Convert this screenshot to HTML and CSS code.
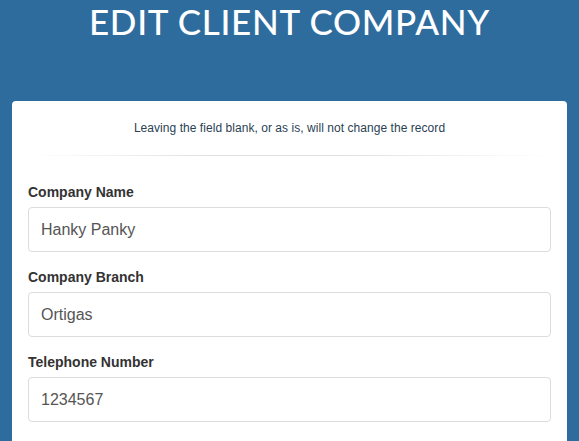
FILE: index.html
```html
<!DOCTYPE html>
<html>
<head>
<meta charset="utf-8">
<link rel="stylesheet" href="styles.css">
</head>
<body>
<div class="page">
  <h1 class="title">EDIT CLIENT COMPANY</h1>
  <div class="card">
    <p class="note">Leaving the field blank, or as is, will not change the record</p>
    <div class="divider"></div>
    <div class="group">
      <label class="label">Company Name</label>
      <div class="input">Hanky Panky</div>
    </div>
    <div class="group">
      <label class="label">Company Branch</label>
      <div class="input">Ortigas</div>
    </div>
    <div class="group">
      <label class="label">Telephone Number</label>
      <div class="input">1234567</div>
    </div>
    <div class="group">
      <label class="label">Company Address</label>
      <div class="input"></div>
    </div>
  </div>
</div>
</body>
</html>
```

FILE: styles.css
```css
* { box-sizing: border-box; }
html, body {
  margin: 0;
  padding: 0;
  background: #2e6c9e;
  font-family: "Liberation Sans", Arial, sans-serif;
  overflow: hidden;
}
.page {
  padding: 0 12px;
}
.title {
  margin: 0;
  height: 101px;
  padding-top: 1px;
  text-align: center;
  color: #ffffff;
  font-family: "Lato", "Open Sans", sans-serif;
  font-weight: 500;
  font-size: 35px;
  line-height: 40px;
  letter-spacing: 0.7px;
}
.card {
  background: #ffffff;
  border-radius: 4px;
  padding: 19px 16px 20px;
}
.note {
  margin: 0;
  text-align: center;
  font-size: 12px;
  line-height: 17px;
  letter-spacing: 0.05px;
  color: #2a3f54;
}
.divider {
  height: 1px;
  margin: 18px 0 26px;
  background: linear-gradient(to right, rgba(0,0,0,0) 0%, rgba(0,0,0,0.12) 35%, rgba(0,0,0,0.12) 60%, rgba(0,0,0,0) 100%);
}
.group {
  margin-bottom: 15px;
}
.label {
  display: block;
  font-size: 14px;
  font-weight: bold;
  line-height: 20px;
  margin-bottom: 5px;
  color: #333333;
}
.input {
  height: 45px;
  border: 1px solid #dcdcdc;
  border-radius: 4px;
  padding: 0 12px;
  font-size: 16px;
  line-height: 43px;
  color: #555555;
}
```
